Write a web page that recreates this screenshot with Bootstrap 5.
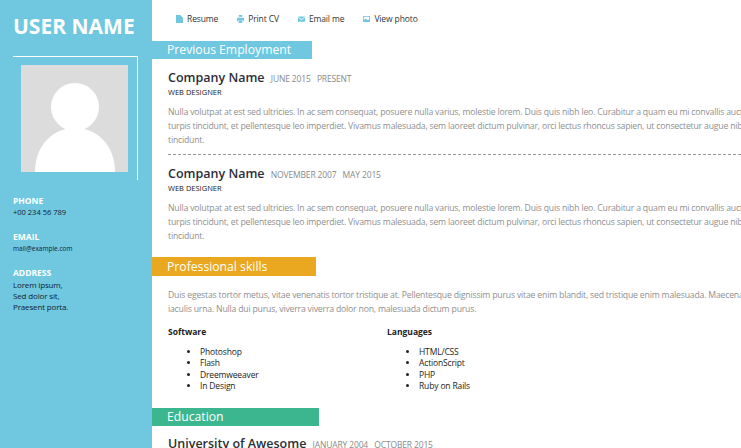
<!DOCTYPE html>
<html lang="en"><head><meta charset="utf-8"><title>CV</title>
<link href="https://cdn.jsdelivr.net/npm/bootstrap@5.3.0/dist/css/bootstrap.min.css" rel="stylesheet">
<style>
html,body{height:448px;overflow:hidden}
body{font-family:"Open Sans","Noto Sans",sans-serif;color:#222;background:#fff}
.cv-page{height:448px;width:741px;overflow:hidden}
.cv-side{width:152px;flex:none;background:#6fc8df;color:#fff;padding:13px 0 0 13px}
.cv-title{font-size:21px;font-weight:700;line-height:26px;margin:0 0 17px;white-space:nowrap}
.cv-frame{width:125px;height:124px;border-top:1px solid #fff;border-right:1px solid #fff;padding:8px 0 0 8px;margin-bottom:15px}
.cv-photo{display:block;width:107px;height:107px}
.cv-lab{font-size:8.5px;font-weight:700;line-height:12px;margin:0}
.cv-val{font-size:7.5px;line-height:11px;color:#123;margin:0 0 13px}
.cv-mail{font-size:6.5px}
.cv-addr{font-size:8px;letter-spacing:-.15px;line-height:11px;color:#123;margin:0}
.cv-main{flex:1 1 0;min-width:0;overflow:hidden}
.cv-nav{height:41px;padding:0 0 3px 24px;gap:19px;font-size:8.5px;letter-spacing:-.12px;color:#333}
.cv-nav svg{width:7px;height:8px;fill:#6fc8df;margin-right:4px;flex:none}
.cv-bar{height:18px;line-height:18px;color:#fff;font-size:12.2px;padding-left:15px}
.bar-a{width:160px;background:#6fc8df}
.bar-b{width:164px;background:#e9a820;height:19px;line-height:19px;margin-top:14px}
.bar-c{width:167px;background:#3cb68f;margin-top:16px}
.cv-job{padding:11px 0 0 16px;white-space:nowrap}
.cv-tight{padding-top:10px}
.cv-para{padding-top:12px}
.cv-co{font-size:12.5px;font-weight:600;line-height:16px;color:#2b2f36;margin:0}
.cv-dt{font-size:8.5px;letter-spacing:-.15px;font-weight:400;color:#8a8a8a;margin-left:3px}
.cv-role{font-size:7.5px;line-height:10px;color:#222;margin:0 0 8px}
.cv-txt{font-size:8.7px;letter-spacing:-.2px;line-height:14px;color:#8f8f8f;margin:0;white-space:nowrap}
.cv-dash{border-top:1px dashed #999;margin:7px 0 0 16px}
.cv-cols{padding:10px 0 0 16px;font-size:8.5px;letter-spacing:-.15px;color:#222}
.cv-col{width:219px}
.cv-h{font-size:8.5px;letter-spacing:0;font-weight:700;line-height:12px;margin:0 0 8px}
.cv-col ul{margin:0;padding-left:32px;line-height:11.4px}
</style></head><body>
<div class="d-flex cv-page">
<aside class="cv-side">
<h1 class="cv-title">USER NAME</h1>
<div class="cv-frame">
<svg class="cv-photo" viewBox="0 0 107 107"><rect width="107" height="107" fill="#dcdcdc"/><circle cx="54" cy="42" r="24" fill="#fff"/><path d="M14 107C14 80 32 63 54 63S94 80 94 107Z" fill="#fff"/></svg>
</div>
<p class="cv-lab">PHONE</p><p class="cv-val">+00 234 56 789</p>
<p class="cv-lab">EMAIL</p><p class="cv-val cv-mail">mail@example.com</p>
<p class="cv-lab">ADDRESS</p>
<p class="cv-addr">Lorem ipsum,<br>Sed dolor sit,<br>Praesent porta.</p>
</aside>
<main class="cv-main">
<nav class="d-flex align-items-center cv-nav">
<span class="d-flex align-items-center"><svg viewBox="0 0 8 9"><path d="M0 0H5L8 3V9H0Z"/></svg>Resume</span>
<span class="d-flex align-items-center"><svg viewBox="0 0 8 9"><path d="M2 0H6V2H2ZM0 3H8V7H6.500V5.500H1.500V7H0ZM2 6H6V9H2Z"/></svg>Print CV</span>
<span class="d-flex align-items-center"><svg viewBox="0 0 8 9"><path d="M0 1.500H8L4 4.800ZM0 2.500V7.500H8V2.500L4 6Z"/></svg>Email me</span>
<span class="d-flex align-items-center"><svg viewBox="0 0 8 9"><path fill-rule="evenodd" d="M0 1H8V8H0ZM1 2V5.500L3 4L5 5.500L6 5L7 6V2Z"/></svg>View photo</span>
</nav>
<div class="cv-bar bar-a">Previous Employment</div>
<div class="cv-job">
<h2 class="cv-co">Company Name <span class="cv-dt">JUNE 2015 &nbsp; PRESENT</span></h2>
<p class="cv-role">WEB DESIGNER</p>
<p class="cv-txt">Nulla volutpat at est sed ultricies. In ac sem consequat, posuere nulla varius, molestie lorem. Duis quis nibh leo. Curabitur a quam eu mi convallis auctor.<br>turpis tincidunt, et pellentesque leo imperdiet. Vivamus malesuada, sem laoreet dictum pulvinar, orci lectus rhoncus sapien, ut consectetur augue nibh<br>tincidunt.</p>
</div>
<div class="cv-dash"></div>
<div class="cv-job">
<h2 class="cv-co">Company Name <span class="cv-dt">NOVEMBER 2007 &nbsp; MAY 2015</span></h2>
<p class="cv-role">WEB DESIGNER</p>
<p class="cv-txt">Nulla volutpat at est sed ultricies. In ac sem consequat, posuere nulla varius, molestie lorem. Duis quis nibh leo. Curabitur a quam eu mi convallis auctor.<br>turpis tincidunt, et pellentesque leo imperdiet. Vivamus malesuada, sem laoreet dictum pulvinar, orci lectus rhoncus sapien, ut consectetur augue nibh<br>tincidunt.</p>
</div>
<div class="cv-bar bar-b">Professional skills</div>
<div class="cv-job cv-para"><p class="cv-txt">Duis egestas tortor metus, vitae venenatis tortor tristique at. Pellentesque dignissim purus vitae enim blandit, sed tristique enim malesuada. Maecenas<br>iaculis urna. Nulla dui purus, viverra viverra dolor non, malesuada dictum purus.</p></div>
<div class="d-flex cv-cols">
<div class="cv-col"><p class="cv-h">Software</p><ul><li>Photoshop</li><li>Flash</li><li>Dreemweeaver</li><li>In Design</li></ul></div>
<div class="cv-col"><p class="cv-h">Languages</p><ul><li>HTML/CSS</li><li>ActionScript</li><li>PHP</li><li>Ruby on Rails</li></ul></div>
</div>
<div class="cv-bar bar-c">Education</div>
<div class="cv-job cv-tight"><h2 class="cv-co">University of Awesome <span class="cv-dt">JANUARY 2004 &nbsp; OCTOBER 2015</span></h2></div>
</main>
</div>
<script src="https://cdn.jsdelivr.net/npm/bootstrap@5.3.0/dist/js/bootstrap.bundle.min.js"></script>
</body></html>
